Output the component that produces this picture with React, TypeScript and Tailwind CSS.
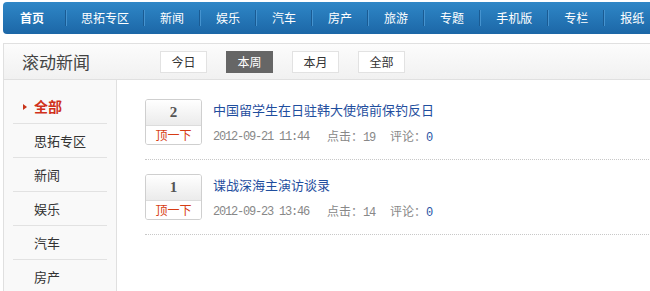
import React from "react";

const navItems = ["思拓专区", "新闻", "娱乐", "汽车", "房产", "旅游", "专题", "手机版", "专栏", "报纸"];
const tabs = ["今日", "本周", "本月", "全部"];
const sideItems = ["思拓专区", "新闻", "娱乐", "汽车", "房产"];
const news = [
  { votes: 2, title: "中国留学生在日驻韩大使馆前保钓反日", date: "2012-09-21 11:44", clicks: 19, comments: 0 },
  { votes: 1, title: "谍战深海主演访谈录", date: "2012-09-23 13:46", clicks: 14, comments: 0 },
];

function Sep() {
  return <div className="h-[16px] w-[2px] shrink-0 border-l border-r border-l-[#1a5b93] border-r-[#4593cf]" />;
}

const mono = { fontFamily: '"Liberation Mono", monospace' };

export default function App() {
  return (
    <div
      className="w-[650px] h-[291px] overflow-hidden bg-white pl-[3px] pt-[2px]"
      style={{ fontFamily: '"Noto Sans CJK SC", "Noto Sans", sans-serif' }}
    >
      <div className="w-[700px]">
        {/* nav */}
        <div className="flex h-[32px] items-center rounded-[4px] bg-gradient-to-b from-[#2f87c7] to-[#1c67a7] text-[12px] text-white">
          <div className="pl-[17px] pr-[21px] font-bold">首页</div>
          {navItems.map((n, i) => (
            <React.Fragment key={n}>
              <Sep />
              <div className={i === 0 ? "px-[14px]" : "px-[15px]"}>{n}</div>
            </React.Fragment>
          ))}
        </div>

        {/* header */}
        <div className="mt-[9px] flex h-[37px] items-center border border-[#e0e0e0] bg-gradient-to-b from-[#fcfcfc] to-[#f1f1f1] pl-[18px]">
          <div className="w-[138px] text-[17px] leading-none text-[#444]">滚动新闻</div>
          <div className="flex gap-[19px]">
            {tabs.map((t) => (
              <div
                key={t}
                className={
                  t === "本周"
                    ? "flex h-[22px] w-[47px] items-center justify-center border border-[#666] bg-[#666] text-[12px] text-white"
                    : "flex h-[22px] w-[47px] items-center justify-center border border-[#e2e2e2] bg-white text-[12px] text-[#333]"
                }
              >
                {t}
              </div>
            ))}
          </div>
        </div>

        {/* body */}
        <div className="flex">
          <div className="h-[220px] w-[114px] shrink-0 border-l border-r border-[#e0e0e0] bg-[#f9f9f9] pt-[10px]">
            <div className="mx-[9px] flex h-[34px] items-center border-b border-[#e2e2e2]">
              <div className="ml-[10px] mr-[7px] h-0 w-0 border-y-[3.5px] border-l-[4px] border-y-transparent border-l-[#c8341a]" />
              <span className="text-[14px] font-bold text-[#d0311b]">全部</span>
            </div>
            {sideItems.map((s, i) => (
              <div
                key={s}
                className={
                  i === sideItems.length - 1
                    ? "mx-[9px] flex h-[34px] items-center pl-[21px] text-[13px] text-[#333]"
                    : "mx-[9px] flex h-[34px] items-center border-b border-[#e2e2e2] pl-[21px] text-[13px] text-[#333]"
                }
              >
                {s}
              </div>
            ))}
          </div>

          <div className="flex-1 pl-[28px] pt-[5px]">
            {news.map((n) => (
              <div key={n.title} className="flex border-b border-dotted border-[#c8c8c8] pb-[12px] pt-[14px]">
                <div className="flex h-[46px] w-[57px] shrink-0 flex-col overflow-hidden rounded-[3px] border border-[#cfcfcf]">
                  <div
                    className="flex h-[25px] items-center justify-center bg-gradient-to-b from-[#ffffff] to-[#ebebeb] text-[15px] font-bold text-[#555]"
                    style={{ fontFamily: '"Liberation Serif", serif' }}
                  >
                    {n.votes}
                  </div>
                  <div className="flex flex-1 items-center justify-center border-t border-[#dcdcdc] bg-white text-[12px] leading-none text-[#d63c14]">
                    顶一下
                  </div>
                </div>
                <div className="ml-[11px] flex flex-col">
                  <div className="mt-[1px] h-[19px] text-[13px] leading-[19px] text-[#1f4e9e]">{n.title}</div>
                  <div className="mt-[8px] flex items-center text-[12px] leading-[18px] text-[#888]">
                    <span className="text-[12px] tracking-[-1.2px] text-[#888]" style={mono}>
                      {n.date}
                    </span>
                    <span className="ml-[18px]">
                      点击：
                      <span style={mono} className="text-[12px] tracking-[-1.2px]">
                        {n.clicks}
                      </span>
                    </span>
                    <span className="ml-[15px]">
                      评论：
                      <span style={mono} className="text-[12px] text-[#2a55a5]">
                        {n.comments}
                      </span>
                    </span>
                  </div>
                </div>
              </div>
            ))}
          </div>
        </div>
      </div>
    </div>
  );
}
